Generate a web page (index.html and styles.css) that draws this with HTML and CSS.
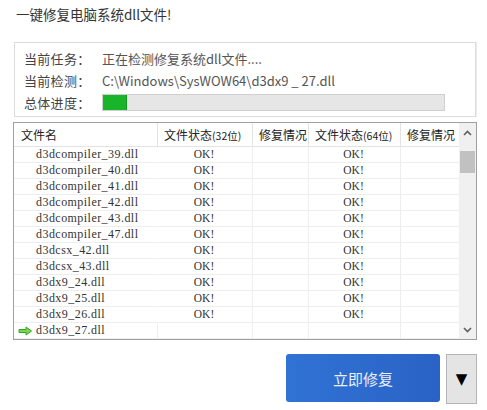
FILE: index.html
```html
<!DOCTYPE html>
<html lang="zh">
<head>
<meta charset="utf-8">
<link rel="stylesheet" href="styles.css">
</head>
<body>
<div class="app">
  <div class="title">一键修复电脑系统dll文件!</div>
  <div class="panel">
    <div class="info-row"><span class="label">当前任务：</span><span class="value">正在检测修复系统dll文件....</span></div>
    <div class="info-row"><span class="label">当前检测：</span><span class="value">C:\Windows\SysWOW64\d3dx9 _ 27.dll</span></div>
    <div class="info-row"><span class="label">总体进度：</span><div class="progress"><div class="progress-fill"></div></div></div>
  </div>
  <div class="table">
    <div class="grid">
      <div class="row head">
        <div class="cell first">文件名</div>
        <div class="cell">文件状态<span class="sm">(32位)</span></div>
        <div class="cell">修复情况</div>
        <div class="cell">文件状态<span class="sm">(64位)</span></div>
        <div class="cell">修复情况</div>
      </div>
      <div class="row"><div class="cell first">d3dcompiler_39.dll</div><div class="cell c">OK!</div><div class="cell"></div><div class="cell c">OK!</div><div class="cell"></div></div>
      <div class="row"><div class="cell first">d3dcompiler_40.dll</div><div class="cell c">OK!</div><div class="cell"></div><div class="cell c">OK!</div><div class="cell"></div></div>
      <div class="row"><div class="cell first">d3dcompiler_41.dll</div><div class="cell c">OK!</div><div class="cell"></div><div class="cell c">OK!</div><div class="cell"></div></div>
      <div class="row"><div class="cell first">d3dcompiler_42.dll</div><div class="cell c">OK!</div><div class="cell"></div><div class="cell c">OK!</div><div class="cell"></div></div>
      <div class="row"><div class="cell first">d3dcompiler_43.dll</div><div class="cell c">OK!</div><div class="cell"></div><div class="cell c">OK!</div><div class="cell"></div></div>
      <div class="row"><div class="cell first">d3dcompiler_47.dll</div><div class="cell c">OK!</div><div class="cell"></div><div class="cell c">OK!</div><div class="cell"></div></div>
      <div class="row"><div class="cell first">d3dcsx_42.dll</div><div class="cell c">OK!</div><div class="cell"></div><div class="cell c">OK!</div><div class="cell"></div></div>
      <div class="row"><div class="cell first">d3dcsx_43.dll</div><div class="cell c">OK!</div><div class="cell"></div><div class="cell c">OK!</div><div class="cell"></div></div>
      <div class="row"><div class="cell first">d3dx9_24.dll</div><div class="cell c">OK!</div><div class="cell"></div><div class="cell c">OK!</div><div class="cell"></div></div>
      <div class="row"><div class="cell first">d3dx9_25.dll</div><div class="cell c">OK!</div><div class="cell"></div><div class="cell c">OK!</div><div class="cell"></div></div>
      <div class="row"><div class="cell first">d3dx9_26.dll</div><div class="cell c">OK!</div><div class="cell"></div><div class="cell c">OK!</div><div class="cell"></div></div>
      <div class="row"><div class="cell first current"><svg class="arrow" width="15" height="10" viewBox="0 0 15 10"><path d="M1 3.5 H8 V1 L13.5 5 L8 9 V6.5 H1 Z" fill="#7fd34a" stroke="#2fa52a" stroke-width="1"/></svg>d3dx9_27.dll</div><div class="cell"></div><div class="cell"></div><div class="cell"></div><div class="cell"></div></div>
    </div>
    <div class="scrollbar">
      <div class="sb-btn"><svg width="9" height="6" viewBox="0 0 9 6"><path d="M1 5 L4.5 1.5 L8 5" fill="none" stroke="#606060" stroke-width="1.6"/></svg></div>
      <div class="sb-track"><div class="sb-thumb"></div></div>
      <div class="sb-btn down"><svg width="9" height="6" viewBox="0 0 9 6"><path d="M1 1 L4.5 4.5 L8 1" fill="none" stroke="#606060" stroke-width="1.6"/></svg></div>
    </div>
  </div>
  <div class="footer">
    <button class="repair">立即修复</button>
    <button class="drop">▼</button>
  </div>
</div>
</body>
</html>
```

FILE: styles.css
```css
html, body {
  margin: 0;
  padding: 0;
  background: #ffffff;
}
body {
  font-family: "Noto Sans CJK SC", "Noto Sans", sans-serif;
  color: #333333;
}
.app {
  width: 487px;
  height: 410px;
  overflow: hidden;
}
.title {
  padding: 4px 0 0 16px;
  height: 20px;
  line-height: 20px;
  font-size: 13.5px;
  color: #333333;
}
.panel {
  margin: 18px 11px 0 14px;
  border: 1px solid #dcdcdc;
  box-shadow: 1px 0 0 #ececec;
  padding: 4px 0 0 9px;
  box-sizing: border-box;
  height: 75px;
}
.info-row {
  display: flex;
  align-items: center;
  height: 22px;
  font-size: 13px;
}
.label {
  width: 78px;
  color: #444444;
  letter-spacing: 0.3px;
}
.value {
  color: #555555;
}
.progress {
  width: 343px;
  height: 17px;
  background: #e6e6e6;
  border: 1px solid #cfcfcf;
  box-sizing: border-box;
  display: flex;
}
.progress-fill {
  width: 23px;
  background: #18b42a;
  border-right: 1px solid #119a20;
}
.table {
  margin: 5px 10px 0 13px;
  display: flex;
  border: 1px solid #9f9f9f;
  height: 218px;
  box-sizing: border-box;
  background: #ffffff;
}
.grid {
  display: flex;
  flex-direction: column;
  width: 445px;
}
.row {
  display: grid;
  grid-template-columns: 144px 95px 56px 92px 58px;
  height: 16.1px;
}
.row.head {
  height: 24px;
}
.cell {
  border-right: 1px solid #eeeeee;
  border-bottom: 1px solid #eeeeee;
  box-sizing: border-box;
  font-family: "Liberation Serif", "Times New Roman", serif;
  font-size: 12px;
  letter-spacing: 0.45px;
  line-height: 15px;
  color: #333333;
  white-space: nowrap;
  overflow: hidden;
}
.row .cell:last-child {
  border-right: none;
}
.cell.first {
  padding-left: 22px;
  border-right-color: #ffffff;
}
.cell.current {
  padding-left: 4px;
  display: flex;
  align-items: center;
  border-right-color: #eeeeee;
}
.arrow {
  margin-right: 3px;
  flex: none;
}
.cell.c {
  text-align: center;
  padding-right: 2px;
  letter-spacing: 0;
  font-size: 11.5px;
}
.head .cell {
  font-family: "Noto Sans CJK SC", "Noto Sans", sans-serif;
  font-size: 12px;
  letter-spacing: 0;
  line-height: 23px;
  padding-left: 6px;
  color: #222222;
  border-right-color: #e3e3e3;
  border-bottom-color: #e3e3e3;
}
.head .cell.first {
  padding-left: 7px;
  border-right-color: #e3e3e3;
}
.sm {
  font-size: 10.5px;
}
.scrollbar {
  width: 17px;
  display: flex;
  flex-direction: column;
  background: #f0f0f0;
}
.sb-btn {
  height: 20px;
  display: flex;
  align-items: center;
  justify-content: center;
}
.sb-btn.down {
  height: 18px;
}
.sb-track {
  flex: 1;
  padding: 8px 1px 0 1px;
}
.sb-thumb {
  height: 22px;
  background: #c1c1c1;
}
.footer {
  display: flex;
  justify-content: flex-end;
  gap: 6px;
  margin: 14px 10px 0 0;
}
.repair {
  width: 154px;
  height: 48px;
  border: none;
  border-radius: 3px;
  background: linear-gradient(90deg, #3073d4, #2a62c6);
  color: #e9f0ff;
  font-family: "Noto Sans CJK SC", "Noto Sans", sans-serif;
  font-size: 15px;
  padding: 0;
}
.drop {
  width: 31px;
  height: 50px;
  border: 1px solid #b5b5b5;
  background: #e4e4e4;
  color: #000000;
  font-size: 15px;
  padding: 0;
  font-family: "DejaVu Sans", sans-serif;
}
```
